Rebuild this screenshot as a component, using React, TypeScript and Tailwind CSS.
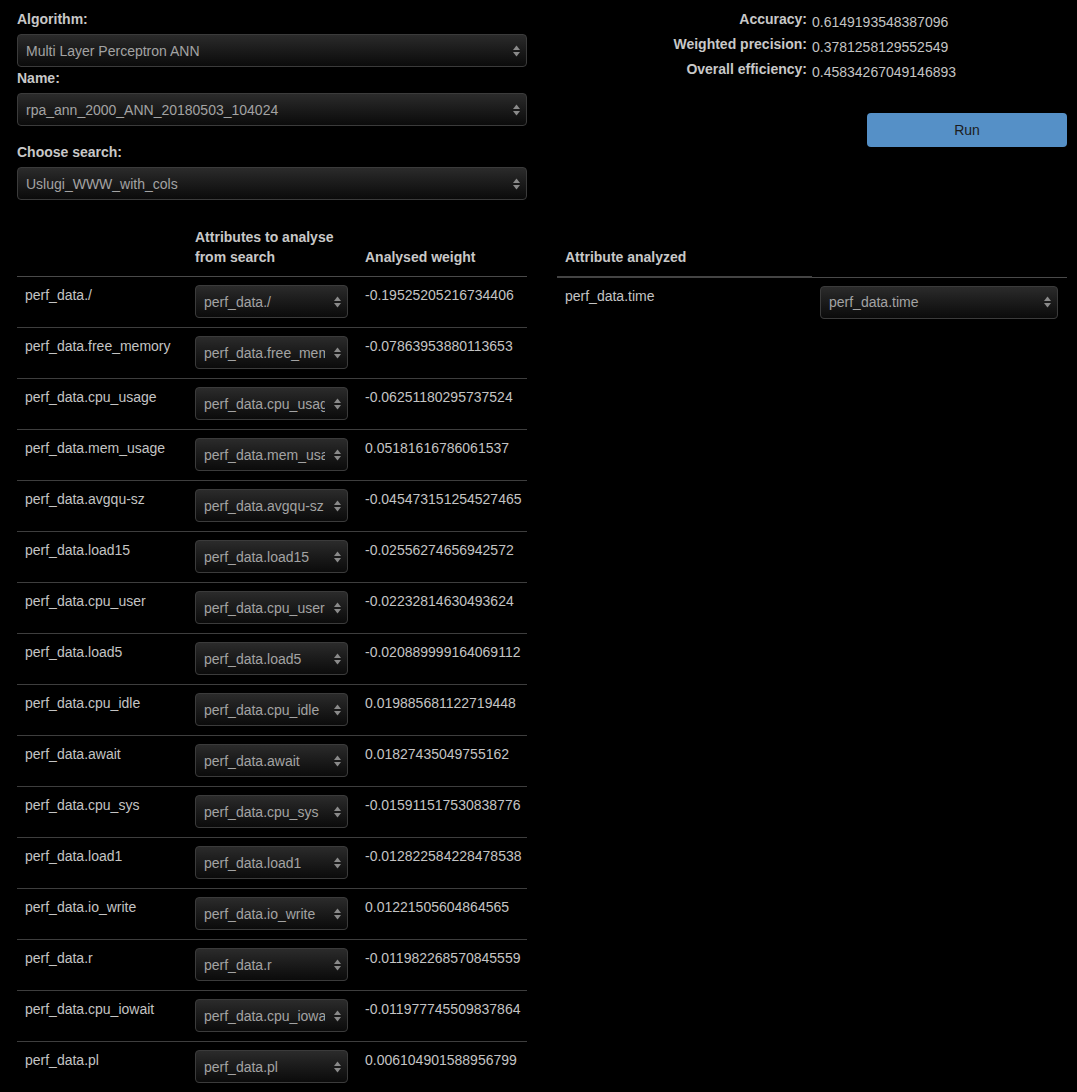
import React from "react";

const rows: [string, string, string][] = [
  ["perf_data./", "perf_data./", "-0.19525205216734406"],
  ["perf_data.free_memory", "perf_data.free_memory", "-0.07863953880113653"],
  ["perf_data.cpu_usage", "perf_data.cpu_usage", "-0.06251180295737524"],
  ["perf_data.mem_usage", "perf_data.mem_usage", "0.05181616786061537"],
  ["perf_data.avgqu-sz", "perf_data.avgqu-sz", "-0.045473151254527465"],
  ["perf_data.load15", "perf_data.load15", "-0.02556274656942572"],
  ["perf_data.cpu_user", "perf_data.cpu_user", "-0.02232814630493624"],
  ["perf_data.load5", "perf_data.load5", "-0.020889999164069112"],
  ["perf_data.cpu_idle", "perf_data.cpu_idle", "0.019885681122719448"],
  ["perf_data.await", "perf_data.await", "0.01827435049755162"],
  ["perf_data.cpu_sys", "perf_data.cpu_sys", "-0.015911517530838776"],
  ["perf_data.load1", "perf_data.load1", "-0.012822584228478538"],
  ["perf_data.io_write", "perf_data.io_write", "0.01221505604864565"],
  ["perf_data.r", "perf_data.r", "-0.011982268570845559"],
  ["perf_data.cpu_iowait", "perf_data.cpu_iowait", "-0.011977745509837864"],
  ["perf_data.pl", "perf_data.pl", "0.006104901588956799"],
];

const metrics = [
  ["Accuracy:", "0.6149193548387096"],
  ["Weighted precision:", "0.3781258129552549"],
  ["Overall efficiency:", "0.45834267049146893"],
];

function Select({ value }: { value: string }) {
  return (
    <div className="relative w-full">
      <select
        defaultValue={value}
        className="block w-full h-[33px] appearance-none rounded-[4px] border border-[#3b3b3b] bg-linear-to-b from-[#2b2b2b] to-[#0b0b0b] pl-[8px] pr-[22px] text-[14px] text-[#a3a3a3] shadow-[0_1px_2px_rgba(0,0,0,0.8)] outline-none"
      >
        <option>{value}</option>
      </select>
      <svg
        className="pointer-events-none absolute right-[7px] top-1/2 -translate-y-1/2"
        width="7"
        height="12"
        viewBox="0 0 7 12"
      >
        <path d="M0 5 L3.5 0.5 L7 5 Z" fill="#8a8a8a" />
        <path d="M0 7 L3.5 11.5 L7 7 Z" fill="#8a8a8a" />
      </svg>
    </div>
  );
}

export default function App() {
  return (
    <div className="min-h-screen bg-black pl-[17px] pr-[10px] pt-[9px] font-['Liberation_Sans',Arial,sans-serif] text-[14px] leading-5 text-[#c4c4c4]">
      <div className="grid grid-cols-2 gap-x-[30px]">
        {/* form */}
        <div className="flex flex-col">
          <label className="font-bold text-[#c8c8c8] mb-[5px]">Algorithm:</label>
          <Select value="Multi Layer Perceptron ANN" />
          <label className="font-bold text-[#c8c8c8] mt-[1px] mb-[5px]">Name:</label>
          <Select value="rpa_ann_2000_ANN_20180503_104024" />
          <label className="font-bold text-[#c8c8c8] mt-[16px] mb-[5px]">Choose search:</label>
          <Select value="Uslugi_WWW_with_cols" />
        </div>

        {/* metrics */}
        <div className="flex flex-col">
          <div className="flex flex-col gap-[2px]">
            {metrics.map(([k, v]) => (
              <div key={k} className="grid grid-cols-2">
                <span className="text-right font-bold text-[#c8c8c8] pr-[5px]">{k}</span>
                <span className="mt-[3px]">{v}</span>
              </div>
            ))}
          </div>
          <button className="self-end mt-[31px] w-[200px] h-[34px] rounded-[4px] bg-[#5590c7] text-[14px] text-[#1c1c1c]">
            Run
          </button>
        </div>

        {/* weights table */}
        <table className="mt-[19px] w-full table-fixed border-collapse">
          <thead>
            <tr className="border-b border-[#4a4a4a]">
              <th className="w-[170px] px-2 pt-2 pb-[9px] align-bottom"></th>
              <th className="w-[170px] px-2 pt-2 pb-[9px] text-left align-bottom font-bold text-[#c8c8c8]">
                Attributes to analyse
                <br />
                from search
              </th>
              <th className="w-[170px] px-2 pt-2 pb-[9px] text-left align-bottom font-bold text-[#c8c8c8]">
                Analysed weight
              </th>
            </tr>
          </thead>
          <tbody>
            {rows.map(([name, sel, w], i) => (
              <tr key={name} className={i === 0 ? "" : "border-t border-[#3e3e3e]"}>
                <td className="px-2 pt-2 pb-[9px] align-top whitespace-nowrap">{name}</td>
                <td className="pl-2 pr-[9px] pt-2 pb-[9px] align-top">
                  <Select value={sel} />
                </td>
                <td className="px-2 pt-2 pb-[9px] align-top whitespace-nowrap">{w}</td>
              </tr>
            ))}
          </tbody>
        </table>

        {/* target table */}
        <div className="mt-[19px]">
          <table className="w-full table-fixed border-collapse">
            <thead>
              <tr>
                <th className="px-2 pt-2 pb-[9px] text-left align-bottom font-bold text-[#c8c8c8] border-b-2 border-[#444]">
                  <br />
                  Attribute analyzed
                </th>
                <th className="border-b border-[#4a4a4a]"></th>
              </tr>
            </thead>
            <tbody>
              <tr>
                <td className="px-2 pt-2 pb-[9px] align-top">perf_data.time</td>
                <td className="pl-2 pr-[9px] pt-2 pb-[9px] align-top">
                  <Select value="perf_data.time" />
                </td>
              </tr>
            </tbody>
          </table>
        </div>
      </div>
    </div>
  );
}
